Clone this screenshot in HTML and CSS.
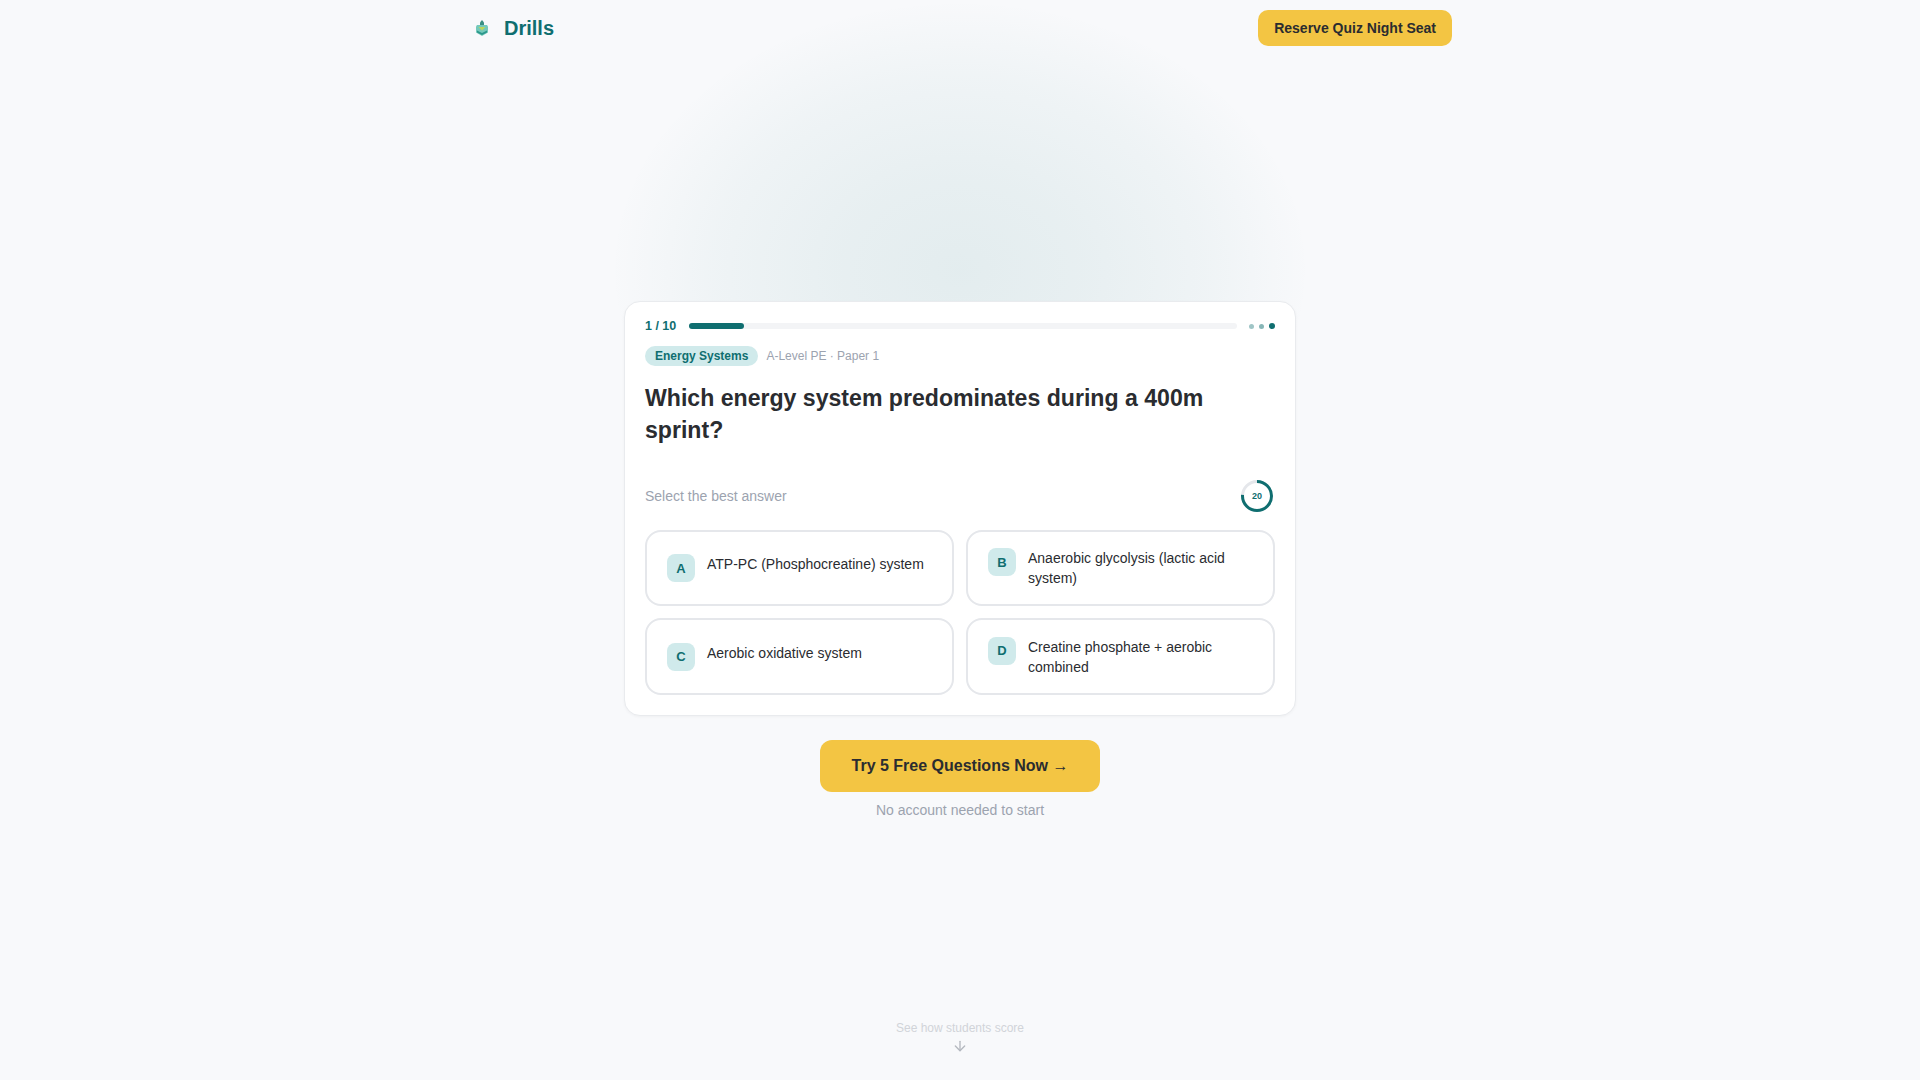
FILE: index.html
```html
<!DOCTYPE html>
<html lang="en">
<head>
    <meta charset="UTF-8">
    <meta name="viewport" content="width=device-width, initial-scale=1.0">
    <title>Drills</title>
    <link rel="stylesheet" href="styles.css">
</head>
<body>
    <header class="site-header">
        <a class="brand" href="#">
            <svg class="brand-icon" viewBox="0 0 24 30" width="24" height="30">
                <path d="M12 7l2 2.500V12h-4V9.500z" fill="#3a8f82"/>
                <path d="M7 12h10l1 1.500v6L12 23l-6-3.500v-6z" fill="#74c9ba"/>
                <path d="M8.500 14h7L12 17.500z" fill="#bcd75a"/>
                <path d="M7 17.500l5 2.500 5-2.500v2L12 22l-5-2.500z" fill="#2b978b"/>
            </svg>
            <span>Drills</span>
        </a>
        <button class="btn-reserve">Reserve Quiz Night Seat</button>
    </header>

    <main class="hero">
        <div class="glow"></div>
        <section class="quiz-card">
            <div class="progress-row">
                <span class="progress-count">1 / 10</span>
                <div class="progress-track"><div class="progress-fill"></div></div>
                <div class="dots">
                    <span class="dot dot-faded"></span>
                    <span class="dot dot-mid"></span>
                    <span class="dot dot-active"></span>
                </div>
            </div>
            <div class="meta-row">
                <span class="topic-pill">Energy Systems</span>
                <span class="paper-label">A-Level PE · Paper 1</span>
            </div>
            <h1 class="question">Which energy system predominates during a 400m sprint?</h1>
            <div class="prompt-row">
                <span class="prompt">Select the best answer</span>
                <div class="timer">
                    <svg viewBox="0 0 32 32" width="32" height="32">
                        <circle cx="16" cy="16" r="14.500" fill="none" stroke="#e5e7eb" stroke-width="3"/>
                        <circle cx="16" cy="16" r="14.500" fill="none" stroke="#0f6e70" stroke-width="3" stroke-dasharray="69 91.100" transform="rotate(-90 16 16)"/>
                    </svg>
                    <span class="timer-num">20</span>
                </div>
            </div>
            <div class="options">
                <div class="option">
                    <div class="option-inner">
                        <span class="option-key">A</span>
                        <span class="option-text">ATP-PC (Phosphocreatine) system</span>
                    </div>
                </div>
                <div class="option">
                    <div class="option-inner">
                        <span class="option-key">B</span>
                        <span class="option-text">Anaerobic glycolysis (lactic acid system)</span>
                    </div>
                </div>
                <div class="option">
                    <div class="option-inner">
                        <span class="option-key">C</span>
                        <span class="option-text">Aerobic oxidative system</span>
                    </div>
                </div>
                <div class="option">
                    <div class="option-inner">
                        <span class="option-key">D</span>
                        <span class="option-text">Creatine phosphate + aerobic combined</span>
                    </div>
                </div>
            </div>
        </section>
        <button class="btn-try">Try 5 Free Questions Now <span class="arrow">→</span></button>
        <p class="no-account">No account needed to start</p>
    </main>

    <footer class="scroll-hint">
        <span>See how students score</span>
        <svg viewBox="0 0 24 24" width="16" height="16" fill="none" stroke="#b4b8bf" stroke-width="2" stroke-linecap="round" stroke-linejoin="round">
            <path d="M12 5v14"/>
            <path d="M19 12l-7 7-7-7"/>
        </svg>
    </footer>
</body>
</html>
```

FILE: styles.css
```css
* {
    box-sizing: border-box;
}
body {
    font-family: "Liberation Sans", Arial, sans-serif;
    background-color: #f8f9fb;
    color: #2a2c30;
    margin: 0;
    height: 1080px;
    overflow: hidden;
    display: flex;
    flex-direction: column;
}
.site-header {
    width: 984px;
    margin: 0 auto;
    height: 56px;
    flex-shrink: 0;
    display: flex;
    align-items: center;
    justify-content: space-between;
    position: relative;
    z-index: 1;
}
.brand {
    display: flex;
    align-items: center;
    gap: 10px;
    padding-left: 2px;
    color: #0f6e70;
    font-size: 20px;
    font-weight: 700;
    text-decoration: none;
}
.brand-icon {
    display: block;
}
.btn-reserve {
    background-color: #f3c543;
    color: #2a2c30;
    border: none;
    border-radius: 10px;
    height: 36px;
    padding: 0 16px;
    font-family: inherit;
    font-size: 14px;
    font-weight: 700;
}

.hero {
    position: relative;
    display: flex;
    flex-direction: column;
    align-items: center;
    padding-top: 245px;
}
.glow {
    position: absolute;
    left: 50%;
    top: -56px;
    width: 700px;
    height: 540px;
    margin-left: -350px;
    background: radial-gradient(ellipse closest-side, rgba(15, 110, 112, 0.09) 0%, rgba(15, 110, 112, 0.07) 35%, rgba(15, 110, 112, 0.04) 70%, rgba(15, 110, 112, 0) 100%);
}
.quiz-card {
    position: relative;
    width: 672px;
    background-color: #fff;
    border: 1px solid #e9ebee;
    border-radius: 16px;
    padding: 16px 20px 20px;
    box-shadow: 0 1px 3px rgba(0, 0, 0, 0.04);
}
.progress-row {
    display: flex;
    align-items: center;
    gap: 13px;
    height: 16px;
}
.progress-count {
    font-size: 12.500px;
    font-weight: 700;
    color: #0f6e70;
}
.progress-track {
    flex: 1;
    height: 6px;
    background-color: #f3f4f6;
    border-radius: 3px;
}
.progress-fill {
    width: 10%;
    height: 100%;
    background-color: #0f6e70;
    border-radius: 3px;
}
.dots {
    display: flex;
    align-items: center;
    gap: 5px;
    margin-left: -1px;
}
.dot {
    width: 5px;
    height: 5px;
    border-radius: 50%;
    background-color: #0f6e70;
}
.dot-faded {
    opacity: 0.4;
}
.dot-mid {
    opacity: 0.5;
}
.dot-active {
    width: 6px;
    height: 6px;
}
.meta-row {
    display: flex;
    align-items: center;
    gap: 8px;
    margin-top: 12px;
}
.topic-pill {
    background-color: #d0eaeb;
    color: #0f6e70;
    font-size: 12px;
    font-weight: 700;
    line-height: 20px;
    padding: 0 10px;
    border-radius: 10px;
}
.paper-label {
    font-size: 12px;
    color: #9ca3af;
}
.question {
    font-size: 23.100px;
    line-height: 32px;
    font-weight: 700;
    margin: 16px 0 0;
}
.prompt-row {
    display: flex;
    align-items: center;
    justify-content: space-between;
    margin-top: 34px;
}
.prompt {
    font-size: 14px;
    color: #9ca3af;
}
.timer {
    position: relative;
    width: 32px;
    height: 32px;
    margin-right: 2px;
}
.timer svg {
    display: block;
}
.timer-num {
    position: absolute;
    inset: 0;
    display: flex;
    align-items: center;
    justify-content: center;
    font-size: 9px;
    font-weight: 700;
    color: #0f6e70;
}
.options {
    display: grid;
    grid-template-columns: 1fr 1fr;
    grid-template-rows: 76px 77px;
    gap: 12px;
    margin-top: 18px;
}
.option {
    display: flex;
    align-items: center;
    border: 2px solid #e5e7eb;
    border-radius: 16px;
    padding: 16px 20px;
}
.option-inner {
    display: flex;
    align-items: flex-start;
    gap: 12px;
}
.option-key {
    flex-shrink: 0;
    width: 28px;
    height: 28px;
    background-color: #d0eaeb;
    color: #0f6e70;
    border-radius: 8px;
    font-size: 13px;
    font-weight: 700;
    display: flex;
    align-items: center;
    justify-content: center;
}
.option-text {
    font-size: 14px;
    line-height: 20px;
}
.btn-try {
    position: relative;
    margin-top: 24px;
    height: 52px;
    padding: 0 32px;
    background-color: #f3c543;
    color: #2a2c30;
    border: none;
    border-radius: 12px;
    font-family: inherit;
    font-size: 16px;
    font-weight: 700;
}
.arrow {
    font-weight: 400;
}
.no-account {
    position: relative;
    margin: 8px 0 0;
    font-size: 14px;
    line-height: 20px;
    color: #9ca3af;
}
.scroll-hint {
    margin-top: auto;
    padding-bottom: 26px;
    display: flex;
    flex-direction: column;
    align-items: center;
    gap: 3px;
    font-size: 12px;
    color: #d1d4d9;
}
```
